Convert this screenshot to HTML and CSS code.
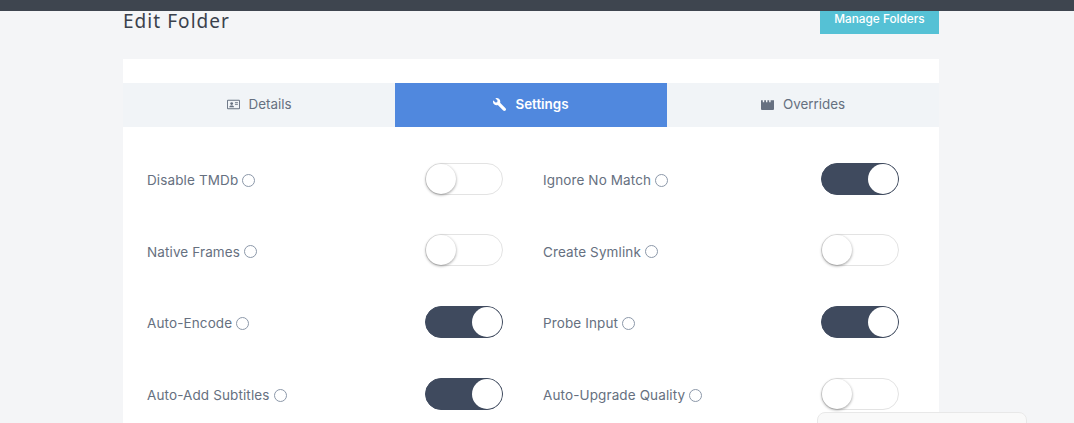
FILE: index.html
```html
<!DOCTYPE html>
<html lang="en">
<head>
<meta charset="utf-8">
<title>Edit Folder</title>
<link rel="stylesheet" href="styles.css">
</head>
<body>
<div class="topbar"></div>
<main class="page">
  <header class="page-head">
    <h1 class="title">Edit Folder</h1>
    <a class="manage">Manage Folders</a>
  </header>
  <section class="card">
    <nav class="tabs">
      <a class="tab">
        <svg class="tab-icon" viewBox="0 0 14 12"><path fill-rule="evenodd" fill="currentColor" d="M1 .8h12a1 1 0 0 1 1 1v8.400a1 1 0 0 1-1 1H1a1 1 0 0 1-1-1V1.800a1 1 0 0 1 1-1zm0 1v8.400h12V1.800z"/><circle cx="5" cy="5" r="1.500" fill="currentColor"/><path fill="currentColor" d="M2.400 9c0-1.300 1-2 2.600-2s2.600.7 2.600 2zM8.600 3.600h3.200v.9H8.600zM8.600 5.500h3.200v.9H8.600z"/></svg>
        <span>Details</span>
      </a>
      <a class="tab tab-active">
        <svg class="tab-icon tab-icon-wrench" viewBox="0 0 512 512"><path fill="currentColor" transform="matrix(-1 0 0 1 512 0)" d="M507.730 109.100c-2.240-9.030-13.540-12.090-20.120-5.510l-74.360 74.360-67.880-11.310-11.310-67.880 74.360-74.360c6.620-6.620 3.430-17.900-5.660-20.160-47.380-11.740-99.550.91-136.580 37.930-39.640 39.640-50.550 97.100-34.050 147.200L18.740 402.760c-24.990 24.990-24.990 65.510 0 90.500 24.990 24.990 65.510 24.990 90.500 0l213.210-213.210c50.120 16.710 107.470 5.680 147.370-34.220 37.070-37.070 49.700-89.320 37.910-136.730z"/></svg>
        <span>Settings</span>
      </a>
      <a class="tab">
        <svg class="tab-icon" viewBox="0 0 13 11"><path fill="currentColor" d="M0 1.200h1.800v2H3.200v-2h1.800v2h1.400v-2h1.800v2h1.400v-2H13V10a1 1 0 0 1-1 1H1a1 1 0 0 1-1-1z"/></svg>
        <span>Overrides</span>
      </a>
    </nav>
    <div class="settings">
      <div class="row"><span class="label">Disable TMDb<i class="help"></i></span><span class="toggle"></span></div>
      <div class="row"><span class="label">Ignore No Match<i class="help"></i></span><span class="toggle on"></span></div>
      <div class="row"><span class="label">Native Frames<i class="help"></i></span><span class="toggle"></span></div>
      <div class="row"><span class="label">Create Symlink<i class="help"></i></span><span class="toggle"></span></div>
      <div class="row"><span class="label">Auto-Encode<i class="help"></i></span><span class="toggle on"></span></div>
      <div class="row"><span class="label">Probe Input<i class="help"></i></span><span class="toggle on"></span></div>
      <div class="row"><span class="label">Auto-Add Subtitles<i class="help"></i></span><span class="toggle on"></span></div>
      <div class="row"><span class="label">Auto-Upgrade Quality<i class="help"></i></span><span class="toggle"></span></div>
    </div>
  </section>
</main>
<div class="popup"></div>
</body>
</html>
```
FILE: styles.css
```css
* { box-sizing: border-box; }
html, body { height: 100%; overflow: hidden; }
body {
  margin: 0;
  background: #f4f5f7;
  font-family: Inter, "Noto Sans", sans-serif;
  color: #667080;
}
.topbar { height: 11px; background: #3e454f; }
.page { width: 816px; margin-left: 123px; }
.page-head {
  display: flex;
  justify-content: space-between;
  align-items: flex-start;
  height: 48px;
}
.title {
  margin: -1px 0 0;
  font-family: "Noto Sans", sans-serif;
  font-size: 19px;
  font-weight: 400;
  line-height: 22px;
  letter-spacing: 1.050px;
  color: #3a414c;
}
.manage {
  width: 119px;
  height: 23px;
  background: #55c1d5;
  color: #fff;
  font-size: 11.800px;
  font-weight: 500;
  line-height: 16px;
  text-align: center;
}
.card { background: #fff; padding-top: 24px; }
.tabs { display: grid; grid-template-columns: repeat(3, 1fr); height: 44px; }
.tab {
  display: flex;
  align-items: center;
  justify-content: center;
  gap: 9px;
  padding-bottom: 2px;
  background: #f1f4f7;
  color: #667080;
  font-size: 13.400px;
}
.tab-active { background: #5088de; color: #fff; font-weight: 600; }
.tab-icon { width: 13px; height: 11px; flex: none; }
.tab-icon-wrench { width: 13px; height: 13px; }
.settings {
  display: grid;
  grid-template-columns: 356px 356px;
  column-gap: 40px;
  row-gap: 39.700px;
  padding: 35.600px 40px 40px 24px;
}
.row {
  display: flex;
  align-items: center;
  justify-content: space-between;
  height: 32px;
}
.label {
  display: flex;
  align-items: center;
  gap: 4px;
  font-size: 13.500px;
  padding-top: 3px;
  letter-spacing: .12px;
}
.help {
  width: 13px;
  height: 13px;
  border: 1.300px solid #8c98a9;
  border-radius: 50%;
}
.toggle {
  position: relative;
  width: 78px;
  height: 32px;
  background: #fff;
  border: 1px solid #e3e3e3;
  border-radius: 16px;
}
.toggle::after {
  content: "";
  position: absolute;
  left: 0;
  top: 0;
  width: 30px;
  height: 30px;
  background: #fff;
  border-radius: 50%;
  box-shadow: 0 1px 3px rgba(0, 0, 0, .4);
}
.toggle.on { background: #3f4a5e; border-color: #3f4a5e; }
.toggle.on::after { left: 46px; box-shadow: none; }
.popup {
  position: fixed;
  left: 817px;
  top: 412px;
  width: 210px;
  height: 60px;
  background: #f9f9f9;
  border: 1px solid #e8e8e8;
  border-radius: 8px;
}
```
